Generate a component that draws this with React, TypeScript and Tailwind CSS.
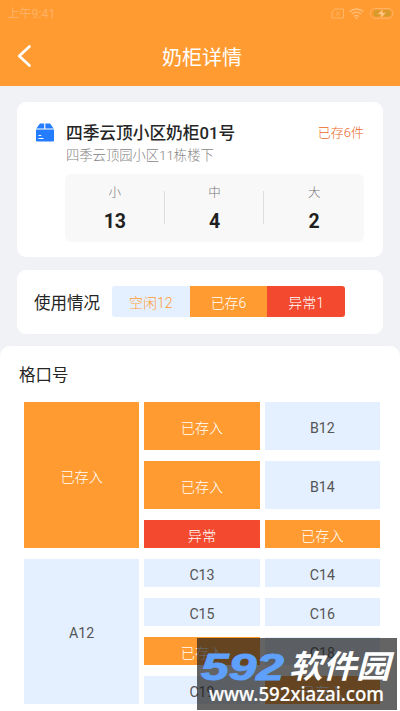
import clsx from 'clsx';

type CellStatus = 'free' | 'stored' | 'error';

interface Cell {
  label: string;
  status: CellStatus;
  size: string;
}

const SIZES = [
  { label: '小', count: 13 },
  { label: '中', count: 4 },
  { label: '大', count: 2 },
];

const USAGE = [
  { label: '空闲12', className: 'bg-[#e4f0ff] text-[#ff9b31]' },
  { label: '已存6', className: 'bg-[#ff9b31] text-white' },
  { label: '异常1', className: 'bg-[#f2492f] text-white' },
];

const CELLS: Cell[] = [
  { label: '已存入', status: 'stored', size: 'row-span-3' },
  { label: '已存入', status: 'stored', size: '' },
  { label: 'B12', status: 'free', size: '' },
  { label: '已存入', status: 'stored', size: '' },
  { label: 'B14', status: 'free', size: '' },
  { label: '异常', status: 'error', size: '' },
  { label: '已存入', status: 'stored', size: '' },
  { label: 'A12', status: 'free', size: 'row-span-4' },
  { label: 'C13', status: 'free', size: '' },
  { label: 'C14', status: 'free', size: '' },
  { label: 'C15', status: 'free', size: '' },
  { label: 'C16', status: 'free', size: '' },
  { label: '已存入', status: 'stored', size: '' },
  { label: 'C18', status: 'free', size: '' },
  { label: 'C19', status: 'free', size: '' },
  { label: '已存入', status: 'stored', size: '' },
];

const CELL_COLORS: Record<CellStatus, string> = {
  free: 'bg-[#e4f0ff] text-[#555555]',
  stored: 'bg-[#ff9b31] text-white',
  error: 'bg-[#f2492f] text-white',
};

const StatusIcons = () => (
  <svg width="64" height="14" viewBox="0 0 64 14" fill="none">
    {/* No SIM */}
    <path d="M4 2H12.5V11H1V5Z" stroke="#ffb56a" strokeWidth="1" strokeLinejoin="round" />
    <path d="M5.2 4.8L8.8 8.4M8.8 4.8L5.2 8.4" stroke="#ffb56a" strokeWidth="1" />
    {/* Wifi */}
    <path
      d="M18.5 4.7C22.5 1.1 28.5 1.1 32.5 4.7M20.7 7.1C23.5 4.6 27.5 4.6 30.3 7.1M23 9.4C24.5 8.1 26.5 8.1 28 9.4"
      stroke="#ffbd78"
      strokeWidth="1.3"
    />
    <circle cx="25.5" cy="11.1" r="1.1" fill="#ffbd78" />
    {/* Charging battery */}
    <rect x="39.3" y="1.5" width="22.6" height="9.8" rx="4.6" stroke="#ffb56a" />
    <rect x="42.5" y="3.2" width="17" height="6.4" rx="2" fill="#d59c2b" />
    <path d="M52 1.7L46.5 7.3H50L49.3 11.7L55 5.7H51.5Z" fill="#ffc98c" stroke="#ff9b31" strokeWidth=".6" />
  </svg>
);

const Header = () => (
  <header className="h-[86px] bg-[#ff9b31]">
    <div className="flex h-7 items-center justify-between pl-[7px] pr-[5px] text-[12.3px] text-[#ffb265]">
      <span className="pt-px">上午9:41</span>
      <StatusIcons />
    </div>
    <div className="grid h-14 grid-cols-[60px_1fr_60px] items-center text-white">
      <svg width="60" height="28" viewBox="0 0 60 28" fill="none" stroke="white" strokeWidth="2.7" strokeLinecap="round" strokeLinejoin="round">
        <path d="M29.5 4.5L19.2 14L29.5 23.5" />
      </svg>
      <h1 className="pl-1 pt-[3px] text-center text-[20px] leading-7">奶柜详情</h1>
    </div>
  </header>
);

const BoxIcon = () => (
  <svg width="18" height="19" viewBox="0 0 18 19" fill="none">
    <path d="M4 .5H8.2V5.5H.3Z" fill="#247cff" />
    <path d="M9.4 .5H14L17.7 5.5H9.4Z" fill="#247cff" />
    <path d="M0 6.5H18V17.3Q18 18.5 16.8 18.5H1.2Q0 18.5 0 17.3Z" fill="#247cff" />
    <path d="M2.5 12.5H5.3M2.5 15.5H7.5" stroke="white" strokeWidth="1.1" />
  </svg>
);

const CabinetCard = () => (
  <section className="mx-[17px] mt-4 flex h-[155px] rounded-[9px] bg-white px-[19px] pt-[19px]">
    <div className="w-[29px] pt-[2px]">
      <BoxIcon />
    </div>
    <div className="flex-1">
      <div className="flex h-[24px] items-center justify-between">
        <h2 className="pl-px pt-[2px] text-[16.7px] font-medium text-[#252525]">四季云顶小区奶柜01号</h2>
        <span className="text-[13px] font-light text-[#eb6728]">已存6件</span>
      </div>
      <p className="h-[29px] pl-px text-[13.3px] font-light leading-[21px] text-[#858585]">四季云顶园小区11栋楼下</p>
      <div className="flex h-[68px] items-center rounded-md bg-[#f8f8f8]">
        {SIZES.map((size, index) => (
          <div
            key={size.label}
            className={clsx('relative flex flex-1 flex-col items-center pt-[5px]', index > 0 && 'before:absolute before:-left-px before:top-[16px] before:h-[33px] before:w-px before:bg-[#dedede]')}
          >
            <span className="text-[12.5px] font-light leading-[26px] text-[#777777]">{size.label}</span>
            <span className="pb-[5px] text-[19.5px] font-bold leading-[31px] text-[#1f1f1f]">{size.count}</span>
          </div>
        ))}
      </div>
    </div>
  </section>
);

const UsageCard = () => (
  <section className="mx-[17px] mt-[13px] flex h-16 items-center rounded-[9px] bg-white pl-[17px]">
    <h2 className="w-[78px] pt-1 text-[16.5px] text-[#252525]">使用情况</h2>
    <div className="mb-px flex h-[31px] w-[233px] overflow-hidden rounded-[3px]">
      {USAGE.map((item) => (
        <div key={item.label} className={clsx('flex flex-1 items-center justify-center pt-[3px] text-[14px] font-light', item.className)}>
          {item.label}
        </div>
      ))}
    </div>
  </section>
);

const CellGrid = () => (
  <section className="mt-3 h-[365px] rounded-t-[10px] bg-white px-[19px] pt-4">
    <h2 className="h-[40.4px] pt-[2px] text-[16.5px] leading-6 text-[#252525]">格口号</h2>
    <div className="ml-[5px] grid w-[356px] grid-cols-3 grid-rows-[48px_48px_28px_28px_28px_28px_28px] gap-x-[5px] gap-y-[11px]">
      {CELLS.map((cell, index) => (
        <div
          key={index}
          className={clsx('flex items-center justify-center text-[14.2px]', cell.status === 'free' ? 'pt-1' : 'pt-[4px] font-light', CELL_COLORS[cell.status], cell.size)}
        >
          {cell.label}
        </div>
      ))}
    </div>
  </section>
);

const Watermark = () => (
  <div className="absolute bottom-px left-[197px] h-[72px] w-[200px] bg-[#1a1a1a]/68">
    <svg width="200" height="72" viewBox="0 0 200 72">
      <text x="4" y="42" textLength="83" lengthAdjust="spacingAndGlyphs" fontSize="37" fontWeight="700" fontStyle="italic" fontFamily="'Liberation Sans', sans-serif" fill="#5ea0fb" stroke="#5ea0fb" strokeWidth="1">
        592
      </text>
      <text x="92" y="40" textLength="101" lengthAdjust="spacingAndGlyphs" fontSize="32" fontWeight="700" fontStyle="italic" fontFamily="'Noto Sans CJK SC', sans-serif" fill="white">
        软件园
      </text>
      <text x="12" y="63" textLength="175" lengthAdjust="spacingAndGlyphs" fontSize="20" fontWeight="500" fontFamily="'Noto Sans', sans-serif" fill="white" stroke="white" strokeWidth=".2">
        www.592xiazai.com
      </text>
    </svg>
  </div>
);

export default function App() {
  return (
    <main className="relative h-[711px] w-[400px] overflow-hidden bg-[#f1f2f6] font-[Roboto,'Noto_Sans_CJK_SC',sans-serif]">
      <Header />
      <CabinetCard />
      <UsageCard />
      <CellGrid />
      <Watermark />
    </main>
  );
}
